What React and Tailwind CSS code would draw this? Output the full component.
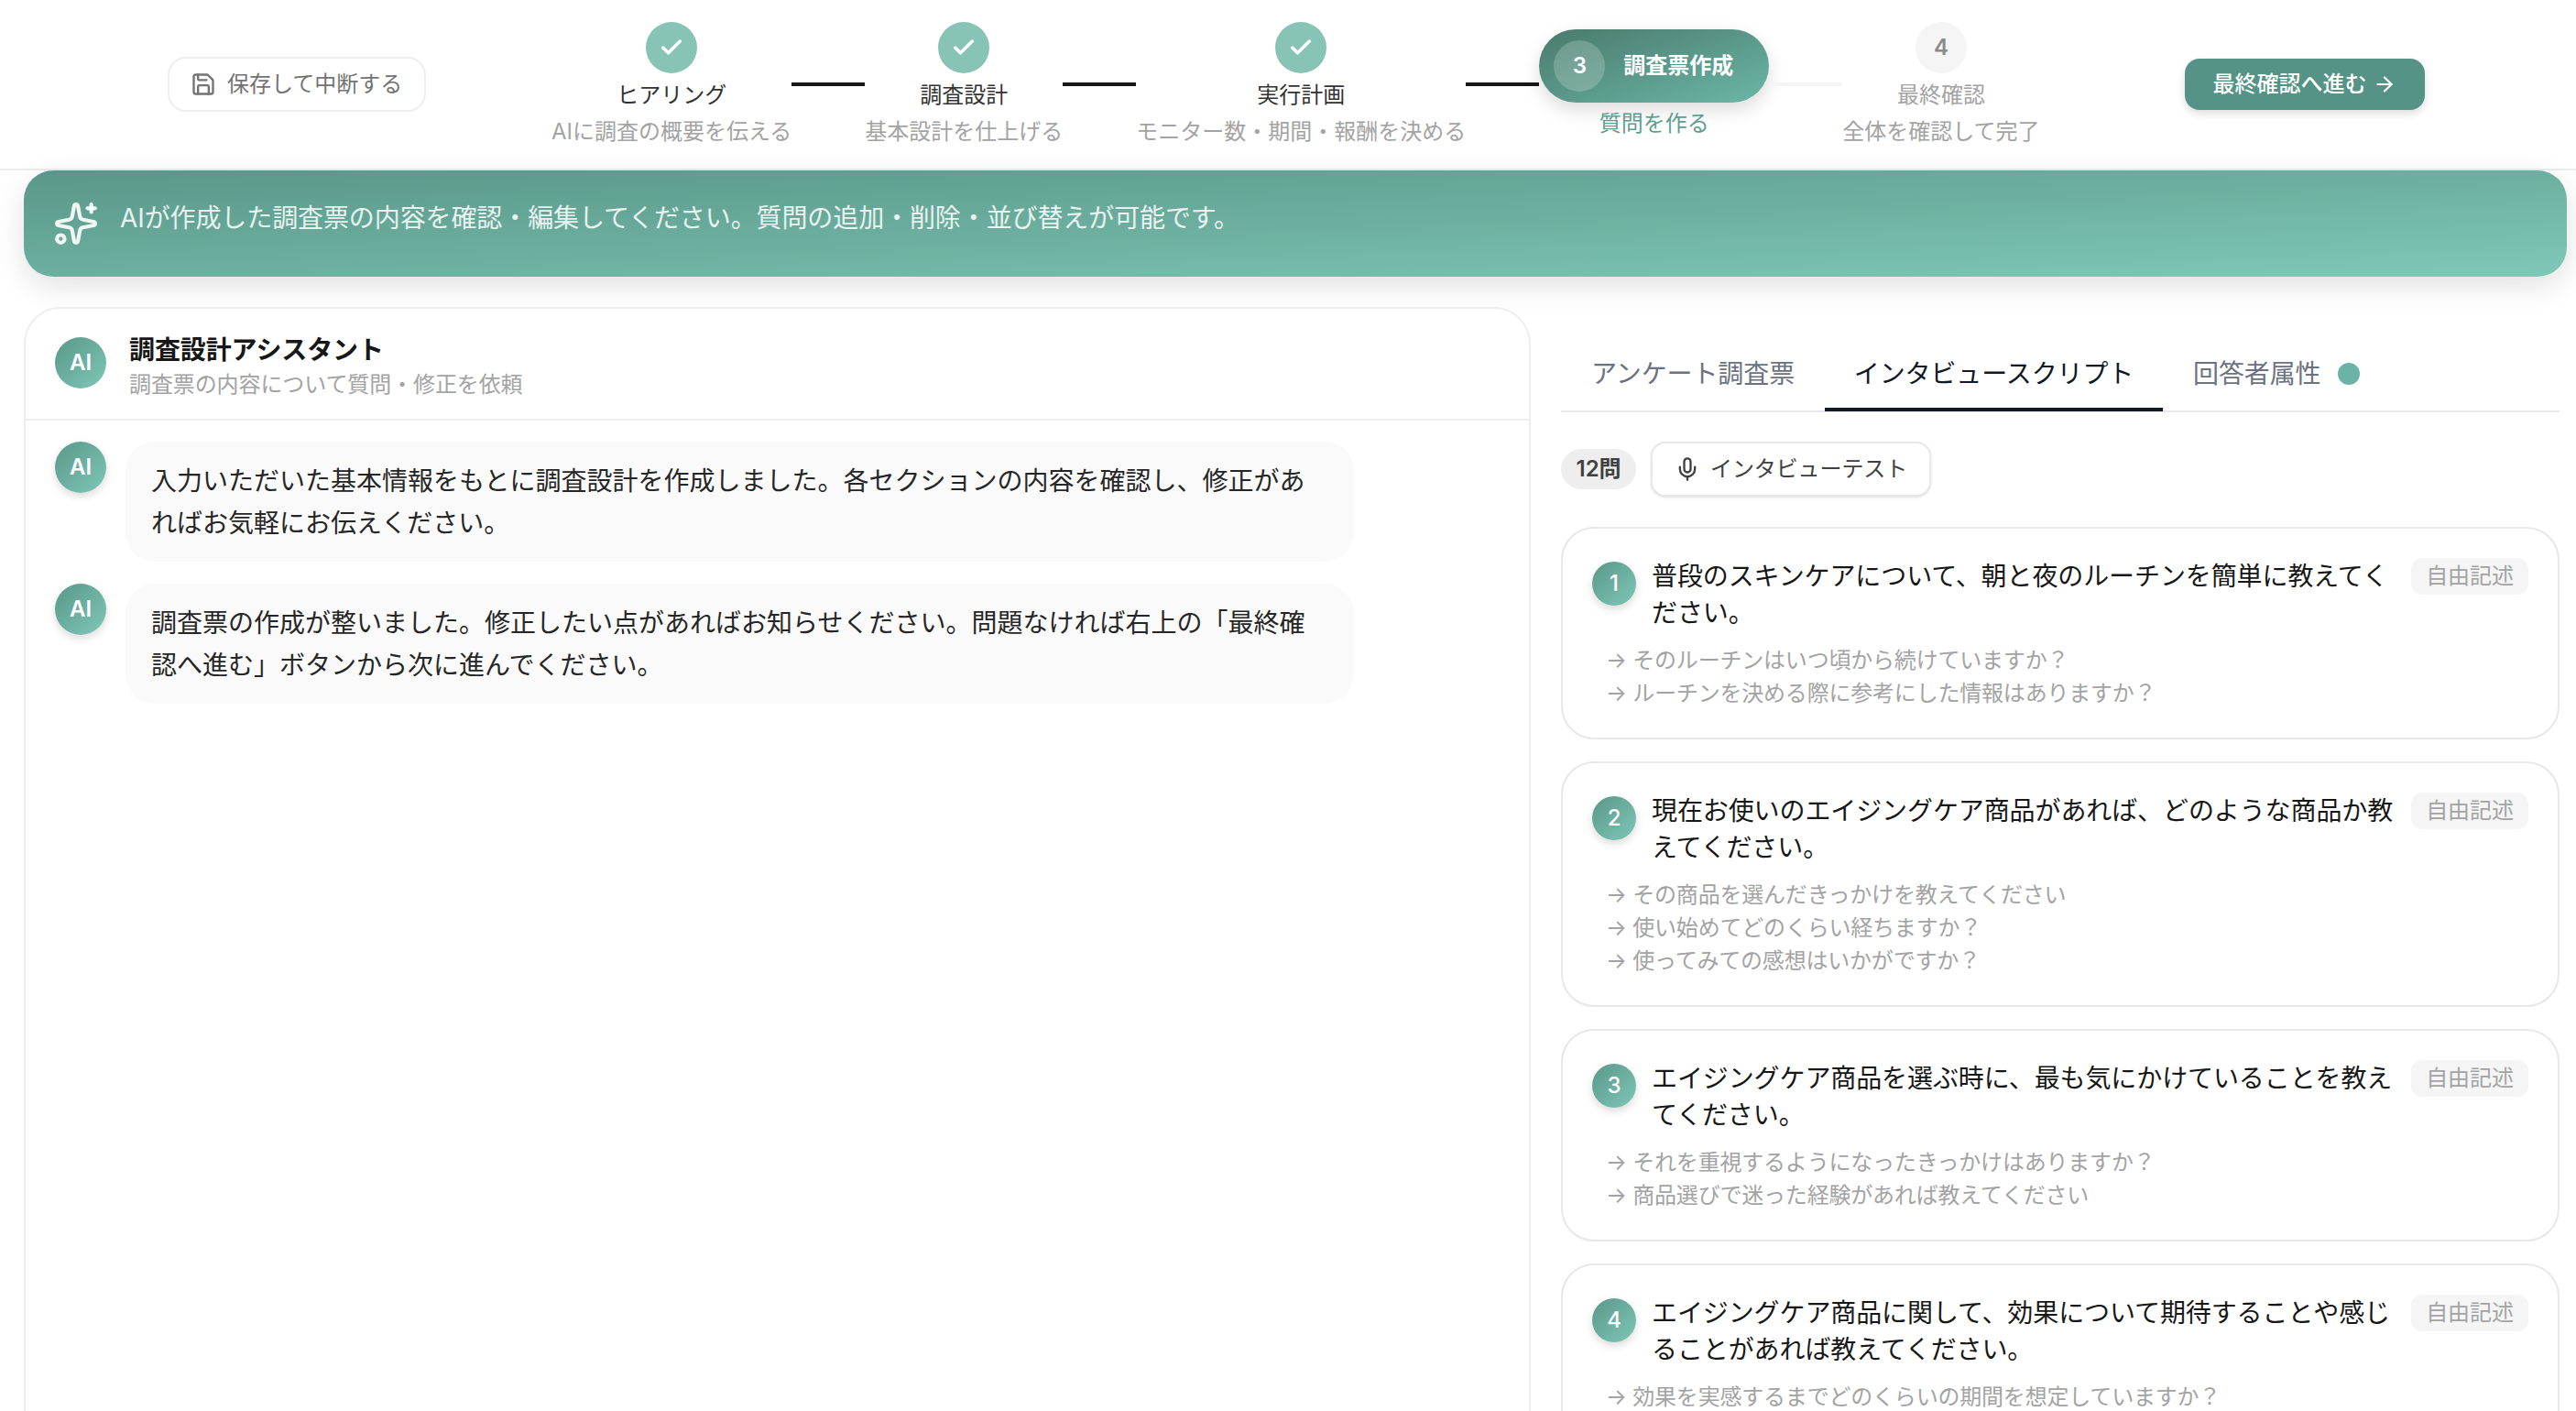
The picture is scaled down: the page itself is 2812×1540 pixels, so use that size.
import { Check, Save, Sparkles, ArrowRight, Mic } from 'lucide-react';

const steps = [
  { n: 1, label: 'ヒアリング', sub: 'AIに調査の概要を伝える', state: 'done' },
  { n: 2, label: '調査設計', sub: '基本設計を仕上げる', state: 'done' },
  { n: 3, label: '実行計画', sub: 'モニター数・期間・報酬を決める', state: 'done' },
  { n: 3, label: '調査票作成', sub: '質問を作る', state: 'active' },
  { n: 4, label: '最終確認', sub: '全体を確認して完了', state: 'todo' },
];

const messages = [
  '入力いただいた基本情報をもとに調査設計を作成しました。各セクションの内容を確認し、修正があればお気軽にお伝えください。',
  '調査票の作成が整いました。修正したい点があればお知らせください。問題なければ右上の「最終確認へ進む」ボタンから次に進んでください。',
];

const questions = [
  {
    q: '普段のスキンケアについて、朝と夜のルーチンを簡単に教えてください。',
    follow: ['そのルーチンはいつ頃から続けていますか？', 'ルーチンを決める際に参考にした情報はありますか？'],
  },
  {
    q: '現在お使いのエイジングケア商品があれば、どのような商品か教えてください。',
    follow: ['その商品を選んだきっかけを教えてください', '使い始めてどのくらい経ちますか？', '使ってみての感想はいかがですか？'],
  },
  {
    q: 'エイジングケア商品を選ぶ時に、最も気にかけていることを教えてください。',
    follow: ['それを重視するようになったきっかけはありますか？', '商品選びで迷った経験があれば教えてください'],
  },
  {
    q: 'エイジングケア商品に関して、効果について期待することや感じることがあれば教えてください。',
    follow: ['効果を実感するまでどのくらいの期間を想定していますか？'],
  },
];

const Connector = ({ on }) => (
  <div className={`w-[80px] h-[4px] mt-[66px] shrink-0 ${on ? 'bg-[#171717]' : 'bg-[#f5f5f5]'}`} />
);

const Step = ({ step }) => {
  if (step.state === 'active') {
    return (
      <div className="flex flex-col items-center shrink-0 w-[251px]">
        <div className="mt-[8px] w-[251px] h-[80px] rounded-full flex items-center pl-[16px] gap-[20px] bg-linear-to-br from-[#4a7a6e] to-[#6bb7a6] shadow-[0_8px_20px_rgba(0,0,0,0.14)]">
          <span className="w-[56px] h-[56px] rounded-full bg-white/20 flex items-center justify-center text-white text-[24px] font-semibold">{step.n}</span>
          <span className="text-white text-[24px] font-semibold whitespace-nowrap">{step.label}</span>
        </div>
        <div className="mt-[5px] text-[24px] leading-[36px] text-[#5f9e8f] whitespace-nowrap">{step.sub}</div>
      </div>
    );
  }
  const done = step.state === 'done';
  return (
    <div className="flex flex-col items-center shrink-0">
      <div className={`w-[56px] h-[56px] rounded-full flex items-center justify-center ${done ? 'bg-[#88c4b5]' : 'bg-[#f5f5f5]'}`}>
        {done ? <Check size={28} strokeWidth={3} className="text-white" /> : <span className="text-[24px] font-semibold text-[#8a8a8a]">{step.n}</span>}
      </div>
      <div className={`mt-[6px] text-[24px] leading-[36px] whitespace-nowrap ${done ? 'text-[#333333]' : 'text-[#a3a3a3]'}`}>{step.label}</div>
      <div className="mt-[4px] text-[24px] leading-[36px] text-[#a3a3a3] whitespace-nowrap">{step.sub}</div>
    </div>
  );
};

const Avatar = ({ shadow }) => (
  <div className={`w-[56px] h-[56px] shrink-0 rounded-full flex items-center justify-center bg-linear-to-br from-[#5a9789] to-[#7fc8b7] text-white text-[24px] font-semibold ${shadow ? 'shadow-[0_4px_10px_rgba(0,0,0,0.14)]' : ''}`}>
    AI
  </div>
);

const QuestionCard = ({ index, item }) => (
  <div className="bg-white border-2 border-[#e7e7ec] rounded-[36px] px-[32px] pt-[32px] pb-[30px]">
    <div className="flex items-start">
      <div className="w-[48px] h-[48px] mt-[4px] shrink-0 rounded-full flex items-center justify-center bg-linear-to-br from-[#5a9789] to-[#7fc8b7] text-white text-[24px] font-medium shadow-[0_4px_10px_rgba(0,0,0,0.14)]">
        {index + 1}
      </div>
      <p className="ml-[17px] flex-1 text-[28px] leading-[40px] text-[#171717]">{item.q}</p>
      <span className="ml-[16px] shrink-0 w-[128px] h-[40px] rounded-[12px] bg-[#f5f5f5] flex items-center justify-center text-[24px] text-[#a3a3a3]">自由記述</span>
    </div>
    <div className="mt-[14px] pl-[15px]">
      {item.follow.map(f => (
        <div key={f} className="text-[24px] leading-[36px] tracking-[-0.2px] text-[#a3a3a3]">→ {f}</div>
      ))}
    </div>
  </div>
);

export default function App() {
  return (
    <div className="h-[1540px] overflow-hidden bg-white antialiased tracking-[-0.1px] font-['Inter','Noto_Sans_CJK_JP',sans-serif]">
      {/* Header */}
      <header className="h-[186px] border-b-2 border-[#ededed] flex items-center pl-[183px] tracking-normal">
        <button className="w-[282px] h-[60px] shrink-0 flex items-center gap-[12px] pl-[23px] rounded-[20px] border-2 border-[#eeeeee] bg-white text-[24px] text-[#737373] whitespace-nowrap">
          <Save size={28} strokeWidth={2} /> 保存して中断する
        </button>
        <div className="ml-[137px] self-start mt-[24px] flex items-start">
          <Step step={steps[0]} />
          <Connector on />
          <Step step={steps[1]} />
          <Connector on />
          <Step step={steps[2]} />
          <Connector on />
          <Step step={steps[3]} />
          <Connector />
          <Step step={steps[4]} />
        </div>
        <button className="ml-[158px] w-[262px] h-[56px] shrink-0 flex items-center justify-center gap-[6px] rounded-[16px] bg-[#559386] text-white text-[24px] font-medium whitespace-nowrap shadow-[0_4px_10px_rgba(0,0,0,0.14)]">
          最終確認へ進む <ArrowRight size={26} />
        </button>
      </header>

      {/* Banner */}
      <div className="ml-[26px] mr-[10px] h-[116px] rounded-[32px] flex items-center pl-[32px] gap-[23px] bg-linear-to-br from-[#5a9789] to-[#7fc8b7] shadow-[0_10px_32px_rgba(0,0,0,0.12)]">
        <Sparkles size={50} strokeWidth={2} className="text-white/90" />
        <p className="pb-[12px] text-[28px] text-white/85">AIが作成した調査票の内容を確認・編集してください。質問の追加・削除・並び替えが可能です。</p>
      </div>

      <div className="flex items-start pl-[26px] pr-[18px] mt-[33px] gap-[33px]">
        {/* Chat */}
        <section className="w-[1645px] h-[1300px] shrink-0 border-2 border-[#eeeeee] rounded-[40px] bg-white">
          <div className="h-[122px] border-b-2 border-[#eeeeee] flex items-center gap-[25px] px-[32px] pb-[2px]">
            <Avatar />
            <div className="mt-[7px]">
              <h3 className="text-[28px] leading-[40px] font-bold text-[#171717]">調査設計アシスタント</h3>
              <p className="text-[24px] leading-[36px] text-[#a3a3a3]">調査票の内容について質問・修正を依頼</p>
            </div>
          </div>
          <div className="px-[32px] pt-[23px] space-y-[24px]">
            {messages.map(m => (
              <div key={m} className="flex items-start gap-[21px]">
                <Avatar shadow />
                <div className="w-[1341px] rounded-[32px] bg-[#fafafa] pl-[28px] pr-[44px] pt-[21px] pb-[19px] text-[28px] leading-[45.5px] tracking-normal text-[#262626]">{m}</div>
              </div>
            ))}
          </div>
        </section>

        {/* Script */}
        <section className="flex-1 pt-[33px]">
          <div className="h-[82px] border-b-2 border-[#e7e7ec] flex items-start">
            <button className="h-[81px] w-[288px] pt-[2px] border-b-4 border-transparent text-[28px] text-[#6b7280]">アンケート調査票</button>
            <button className="h-[81px] w-[369px] pt-[2px] border-b-4 border-[#111827] text-[28px] text-[#111827]">インタビュースクリプト</button>
            <button className="h-[81px] pl-[33px] pt-[2px] border-b-4 border-transparent flex items-center gap-[18px] text-[28px] text-[#6b7280]">
              回答者属性 <span className="w-[24px] h-[24px] rounded-full bg-[#6bb3a4]" />
            </button>
          </div>
          <div className="mt-[32px] flex items-center gap-[16px]">
            <span className="h-[44px] w-[82px] justify-center rounded-full bg-[#eeeeee] flex items-center text-[24px] font-semibold text-[#404040]">12問</span>
            <button className="h-[60px] w-[306px] rounded-[16px] border-2 border-[#e8e8e8] bg-white flex items-center pl-[24px] gap-[11px] text-[24px] text-[#404040] shadow-sm">
              <Mic size={28} /> インタビューテスト
            </button>
          </div>
          <div className="mt-[33px] space-y-[24px]">
            {questions.map((item, i) => (
              <QuestionCard key={i} index={i} item={item} />
            ))}
          </div>
        </section>
      </div>
    </div>
  );
}
